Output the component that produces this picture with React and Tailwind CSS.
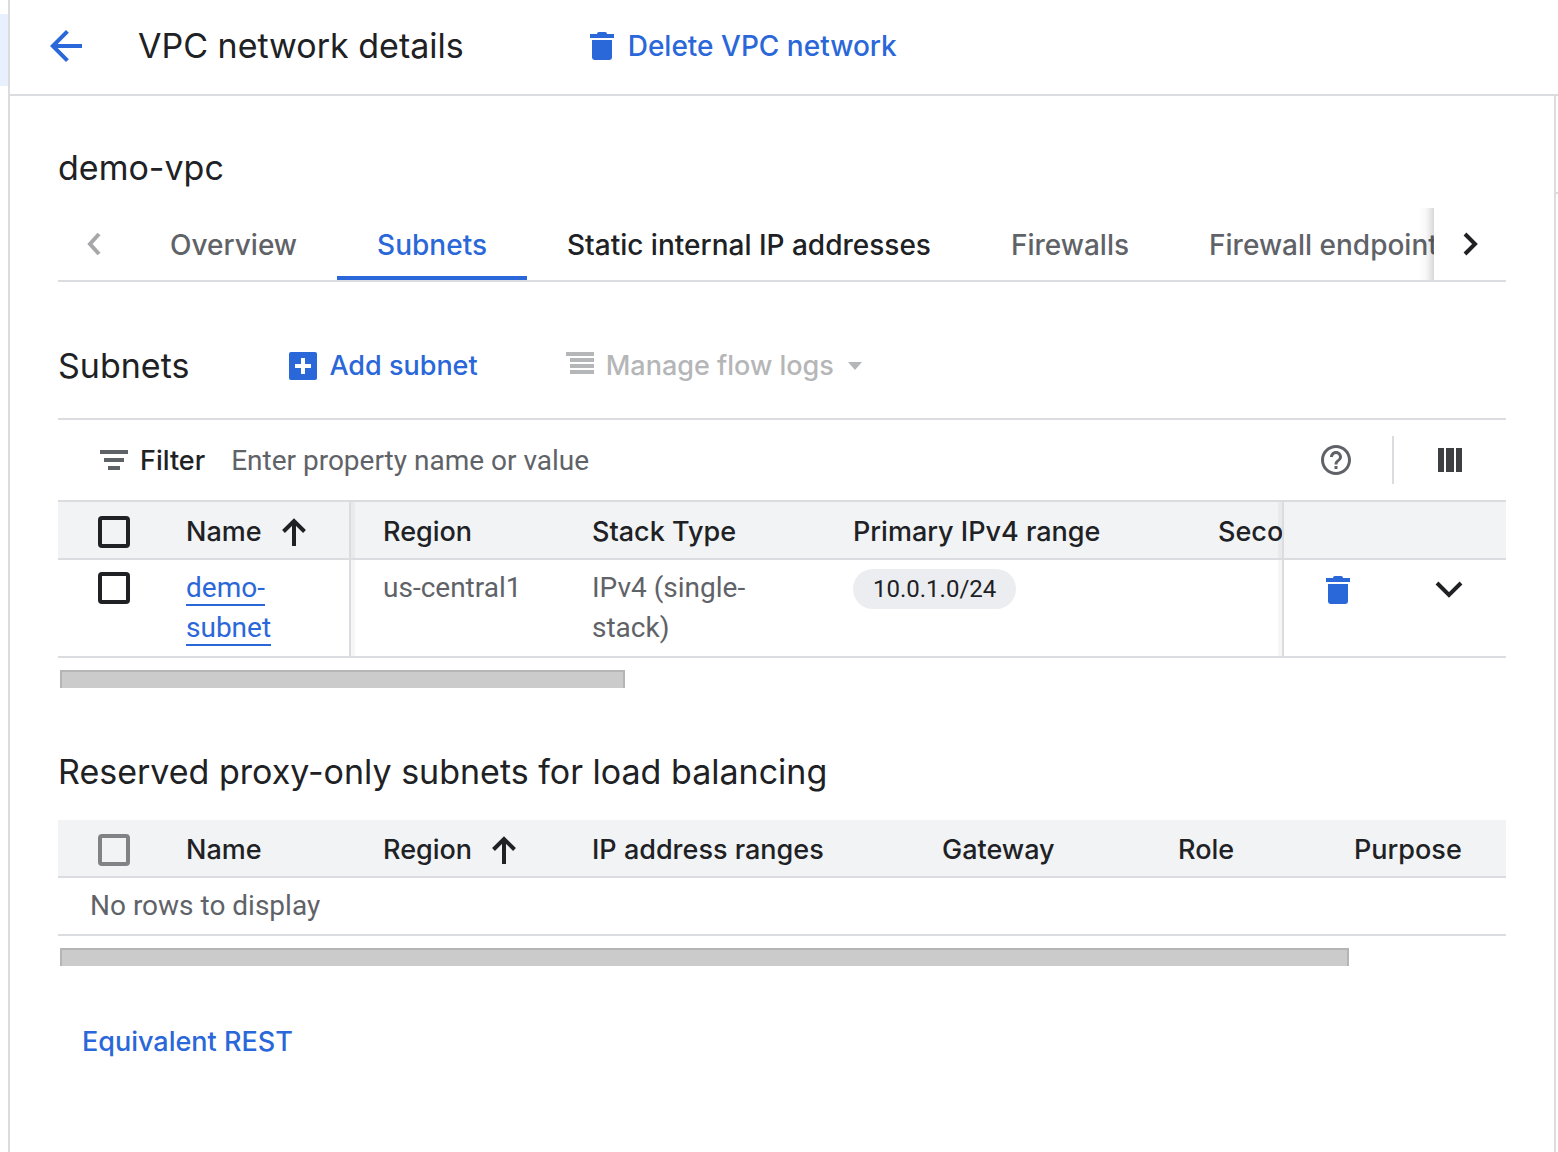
import { MdArrowBack, MdHelpOutline } from "react-icons/md";

function Trash() {
  return (
    <svg width="24" height="28" viewBox="0 0 24 28" fill="currentColor" aria-hidden="true">
      <path d="M0 2h7c0-1.200.8-2 2-2h6c1.200 0 2 .8 2 2h7v4H0zM2 8h20v17a3 3 0 0 1-3 3H5a3 3 0 0 1-3-3z" />
    </svg>
  );
}

function SortArrow() {
  return (
    <svg width="24" height="28" viewBox="0 0 24 28" fill="none" stroke="currentColor" strokeWidth="4" aria-hidden="true">
      <path d="M1.500 13.500 12 3l10.500 10.500M12 3v25" />
    </svg>
  );
}

function Chevron({ d, w, h }) {
  return (
    <svg width={w} height={h} viewBox={`0 0 ${w} ${h}`} fill="none" stroke="currentColor" strokeWidth="4" aria-hidden="true">
      <path d={d} />
    </svg>
  );
}

function Check({ label, disabled }) {
  return (
    <input
      type="checkbox"
      aria-label={label}
      disabled={disabled}
      className="block size-8 appearance-none rounded border-4 border-[#202124] disabled:border-[#808285]"
    />
  );
}

const tabs = ["Overview", "Subnets", "Static internal IP addresses", "Firewalls", "Firewall endpoints"];
const tabColor = {
  Subnets: "text-[#2a67d9] border-[#2a67d9]",
  "Static internal IP addresses": "text-[#202124] border-transparent",
};

const shadeLeft = "shadow-[inset_4px_0_0_rgba(32,33,36,0.04)]";
const shadeRight = "shadow-[inset_-4px_0_0_rgba(32,33,36,0.04)]";
const th = "h-[58px] overflow-hidden bg-[#f1f3f4] border-b-2 border-[#dadce0] p-0 pt-1 pl-8 text-left font-medium whitespace-nowrap font-[Inter,sans-serif] text-[27px] leading-10 text-[#202124]";
const td = "border-b-2 border-[#dadce0] py-2 pl-8 pr-8 align-top";

export default function App() {
  return (
    <div className="flex min-h-screen bg-white font-[Roboto,sans-serif] text-[28px] leading-10 text-[#5f6368]">
      <div className="w-2 shrink-0 pt-3.5">
        <div className="h-18 bg-[#e8f0fe]" />
      </div>
      <div className="flex min-w-0 flex-1 flex-col border-l-2 border-[#dadce0]">
        <header className="flex h-24 shrink-0 items-center border-b-2 border-[#dadce0] pb-0.5 pl-8">
          <button aria-label="Back" className="text-[#2a67d9]">
            <MdArrowBack size={48} />
          </button>
          <h1 className="ml-12 font-[Inter,sans-serif] text-[34px] text-[#202124]">VPC network details</h1>
          <button className="ml-31.5 flex items-center gap-3.5 font-[Inter,sans-serif] font-medium text-[#2a67d9]">
            <Trash />
            Delete VPC network
          </button>
        </header>

        <div className="flex flex-1">
          <main className="min-w-0 flex-1 border-r-2 border-[#dadce0] px-12 pb-16">
            <h2 className="pt-13 font-[Inter,sans-serif] text-[34px] text-[#202124]">demo-vpc</h2>

            <nav className="mt-5 flex h-[74px] border-b-2 border-[#dadce0] font-[Inter,sans-serif] font-medium">
              <button aria-label="Previous tabs" disabled className="flex w-18 shrink-0 items-center justify-center text-[#a6a7a9]">
                <Chevron w={16} h={24} d="M13 2 4 12l9 10" />
              </button>
              <div className="relative min-w-0 flex-1 overflow-hidden">
                <div role="tablist" className="flex h-full">
                  {tabs.map((t) => (
                    <button
                      key={t}
                      role="tab"
                      aria-selected={t === "Subnets"}
                      className={`h-full shrink-0 border-b-4 px-10 pt-1.5 whitespace-nowrap ${tabColor[t] || "border-transparent"}`}
                    >
                      {t}
                    </button>
                  ))}
                </div>
                <div className="pointer-events-none absolute inset-y-0 right-0 w-4 bg-linear-to-r from-transparent via-black/3 to-black/15" />
              </div>
              <button aria-label="Next tabs" className="flex w-18 shrink-0 items-center justify-center text-[#202124]">
                <Chevron w={16} h={24} d="m3 2 10 10L3 22" />
              </button>
            </nav>

            <div className="mt-8 flex h-26 items-center font-[Inter,sans-serif] text-[27px]">
              <h3 className="text-[34px] text-[#202124]">Subnets</h3>
              <button className="ml-25 flex items-center gap-3 font-medium text-[#2a67d9]">
                <svg width="28" height="28" viewBox="0 0 28 28" aria-hidden="true">
                  <rect width="28" height="28" rx="2" fill="currentColor" />
                  <path d="M14 6v16M6 14h16" stroke="#fff" strokeWidth="4" />
                </svg>
                Add subnet
              </button>
              <button disabled className="ml-22 flex items-center font-medium text-[#b5b6b8]">
                <svg width="28" height="28" viewBox="0 0 28 28" fill="currentColor" aria-hidden="true">
                  <path d="M0 0h28v4H0zM4 6h24v4H4zM4 12h24v4H4zM4 18h24v4H4z" />
                </svg>
                <span className="ml-3">Manage flow logs</span>
                <svg className="ml-3.5" width="14" height="8" viewBox="0 0 14 8" fill="currentColor" aria-hidden="true">
                  <path d="M0 0h14L7 8z" />
                </svg>
              </button>
            </div>

            <div className="flex h-21 items-center border-y-2 border-[#dadce0] pl-10.5 pr-11">
              <svg width="28" height="20" viewBox="0 0 28 20" fill="currentColor" aria-hidden="true">
                <path d="M0 0h28v4H0zM4 8h20v4H4zM8 16h12v4H8z" />
              </svg>
              <label htmlFor="filter" className="ml-3 pt-0.5 font-[Inter,sans-serif] text-[27px] font-medium text-[#202124]">
                Filter
              </label>
              <input
                id="filter"
                placeholder="Enter property name or value"
                className="ml-6.5 min-w-0 flex-1 pt-0.5 outline-none placeholder:text-[#5f6368] placeholder:opacity-100"
              />
              <button aria-label="Help">
                <MdHelpOutline size={36} />
              </button>
              <span className="ml-9.5 h-12 w-0.5 bg-[#dadce0]" />
              <button aria-label="Columns" className="ml-11 text-[#3c4043]">
                <svg width="24" height="24" viewBox="0 0 24 24" fill="currentColor" aria-hidden="true">
                  <path d="M0 0h6v24H0zM8 0h8v24H8zM18 0h6v24h-6z" />
                </svg>
              </button>
            </div>

            <table className="w-full table-fixed border-separate border-spacing-0">
              <colgroup>
                <col className="w-24" />
                <col className="w-[197px]" />
                <col className="w-[209px]" />
                <col className="w-[261px]" />
                <col className="w-[365px]" />
                <col />
                <col className="w-56" />
              </colgroup>
              <thead>
                <tr>
                  <th className={`${th} pl-10!`}>
                    <Check label="Select all subnets" />
                  </th>
                  <th className={`${th} border-r-2`}>
                    <span className="flex items-center gap-5">
                      Name <SortArrow />
                    </span>
                  </th>
                  <th className={`${th} ${shadeLeft}`}>Region</th>
                  <th className={th}>Stack Type</th>
                  <th className={th}>Primary IPv4 range</th>
                  <th className={`${th} ${shadeRight}`}>Secondary IPv4 ranges</th>
                  <th aria-label="Actions" className={`${th} border-l-2`} />
                </tr>
              </thead>
              <tbody>
                <tr>
                  <td className={`${td} pt-3 pl-10`}>
                    <Check label="Select demo-subnet" />
                  </td>
                  <td className={`${td} border-r-2`}>
                    <a href="#demo-subnet" className="border-b-2 border-[#2a67d9] text-[#2a67d9]">
                      demo-subnet
                    </a>
                  </td>
                  <td className={`${td} ${shadeLeft} whitespace-nowrap`}>us-central1</td>
                  <td className={td}>IPv4 (single-stack)</td>
                  <td className={td}>
                    <span className="inline-block rounded-full bg-[#ecedf1] px-5 text-2xl leading-10 text-[#202124]">10.0.1.0/24</span>
                  </td>
                  <td className={`${td} ${shadeRight}`} />
                  <td className="border-b-2 border-l-2 border-[#dadce0] pt-4 pr-10.5 pl-10.5 align-top">
                    <div className="flex items-center justify-between">
                      <button aria-label="Delete demo-subnet" className="text-[#2a67d9]">
                        <Trash />
                      </button>
                      <button aria-label="Expand row" className="text-[#202124]">
                        <Chevron w={30} h={20} d="m3 3 12 12L27 3" />
                      </button>
                    </div>
                  </td>
                </tr>
              </tbody>
            </table>
            <div className="mt-3 ml-0.5 h-4.5 w-[39%] border-2 border-b-0 border-[#b5b5b5] bg-[#cbcbcb]" />

            <h3 className="mt-16 font-[Inter,sans-serif] text-[34px] text-[#202124]">Reserved proxy-only subnets for load balancing</h3>

            <table className="mt-7 w-full table-fixed border-separate border-spacing-0">
              <colgroup>
                <col className="w-24" />
                <col className="w-[197px]" />
                <col className="w-[209px]" />
                <col className="w-[350px]" />
                <col className="w-[236px]" />
                <col className="w-[176px]" />
                <col />
              </colgroup>
              <thead>
                <tr>
                  <th className={`${th} pl-10!`}>
                    <Check label="Select all proxy-only subnets" disabled />
                  </th>
                  <th className={th}>Name</th>
                  <th className={th}>
                    <span className="flex items-center gap-5">
                      Region <SortArrow />
                    </span>
                  </th>
                  <th className={th}>IP address ranges</th>
                  <th className={th}>Gateway</th>
                  <th className={th}>Role</th>
                  <th className={th}>Purpose</th>
                </tr>
              </thead>
              <tbody>
                <tr>
                  <td colSpan={7} className={td}>
                    No rows to display
                  </td>
                </tr>
              </tbody>
            </table>
            <div className="mt-3 ml-0.5 h-4.5 w-[89%] border-2 border-b-0 border-[#b5b5b5] bg-[#cbcbcb]" />

            <a href="#rest" className="mt-14 ml-6 inline-block font-[Inter,sans-serif] text-[27px] font-medium text-[#2a67d9]">
              Equivalent REST
            </a>
          </main>
          <div className="w-0.5 shrink-0 pt-24">
            <div className="h-0.5 bg-[#dadce0]" />
          </div>
        </div>
      </div>
    </div>
  );
}
